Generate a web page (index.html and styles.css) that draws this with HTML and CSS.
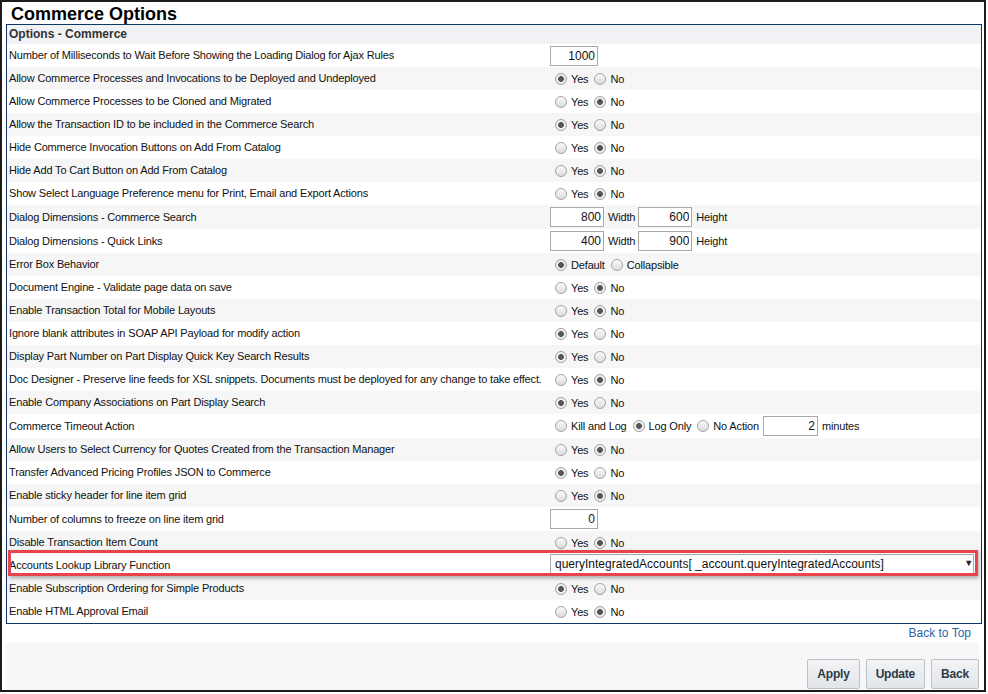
FILE: index.html
```html
<!DOCTYPE html>
<html lang="en">
  <head>
    <meta charset="UTF-8" />
    <title>Commerce Options</title>
    <link rel="stylesheet" href="styles.css">
  </head>
  <body>
    <div class="frame">
      <h1 class="page-title">Commerce Options</h1>

      <div class="panel">
        <div class="panel-head">Options - Commerce</div>

        <div class="rows">
          <div class="row">
            <div class="label">Number of Milliseconds to Wait Before Showing the Loading Dialog for Ajax Rules</div>
            <div class="value"><input type="text" class="num w48" value="1000" /></div>
          </div>
          <div class="row">
            <div class="label">Allow Commerce Processes and Invocations to be Deployed and Undeployed</div>
            <div class="value">
              <label class="opt"><input type="radio" name="r2" checked />Yes</label>
              <label class="opt"><input type="radio" name="r2" />No</label>
            </div>
          </div>
          <div class="row">
            <div class="label">Allow Commerce Processes to be Cloned and Migrated</div>
            <div class="value">
              <label class="opt"><input type="radio" name="r3" />Yes</label>
              <label class="opt"><input type="radio" name="r3" checked />No</label>
            </div>
          </div>
          <div class="row">
            <div class="label">Allow the Transaction ID to be included in the Commerce Search</div>
            <div class="value">
              <label class="opt"><input type="radio" name="r4" checked />Yes</label>
              <label class="opt"><input type="radio" name="r4" />No</label>
            </div>
          </div>
          <div class="row">
            <div class="label">Hide Commerce Invocation Buttons on Add From Catalog</div>
            <div class="value">
              <label class="opt"><input type="radio" name="r5" />Yes</label>
              <label class="opt"><input type="radio" name="r5" checked />No</label>
            </div>
          </div>
          <div class="row">
            <div class="label">Hide Add To Cart Button on Add From Catalog</div>
            <div class="value">
              <label class="opt"><input type="radio" name="r6" />Yes</label>
              <label class="opt"><input type="radio" name="r6" checked />No</label>
            </div>
          </div>
          <div class="row">
            <div class="label">Show Select Language Preference menu for Print, Email and Export Actions</div>
            <div class="value">
              <label class="opt"><input type="radio" name="r7" />Yes</label>
              <label class="opt"><input type="radio" name="r7" checked />No</label>
            </div>
          </div>
          <div class="row tall">
            <div class="label">Dialog Dimensions - Commerce Search</div>
            <div class="value">
              <input type="text" class="num w54" value="800" /><span class="unit">Width</span>
              <input type="text" class="num w54" value="600" /><span class="unit">Height</span>
            </div>
          </div>
          <div class="row tall">
            <div class="label">Dialog Dimensions - Quick Links</div>
            <div class="value">
              <input type="text" class="num w54" value="400" /><span class="unit">Width</span>
              <input type="text" class="num w54" value="900" /><span class="unit">Height</span>
            </div>
          </div>
          <div class="row">
            <div class="label">Error Box Behavior</div>
            <div class="value">
              <label class="opt"><input type="radio" name="r10" checked />Default</label>
              <label class="opt"><input type="radio" name="r10" />Collapsible</label>
            </div>
          </div>
          <div class="row">
            <div class="label">Document Engine - Validate page data on save</div>
            <div class="value">
              <label class="opt"><input type="radio" name="r11" />Yes</label>
              <label class="opt"><input type="radio" name="r11" checked />No</label>
            </div>
          </div>
          <div class="row">
            <div class="label">Enable Transaction Total for Mobile Layouts</div>
            <div class="value">
              <label class="opt"><input type="radio" name="r12" />Yes</label>
              <label class="opt"><input type="radio" name="r12" checked />No</label>
            </div>
          </div>
          <div class="row">
            <div class="label">Ignore blank attributes in SOAP API Payload for modify action</div>
            <div class="value">
              <label class="opt"><input type="radio" name="r13" checked />Yes</label>
              <label class="opt"><input type="radio" name="r13" />No</label>
            </div>
          </div>
          <div class="row">
            <div class="label">Display Part Number on Part Display Quick Key Search Results</div>
            <div class="value">
              <label class="opt"><input type="radio" name="r14" checked />Yes</label>
              <label class="opt"><input type="radio" name="r14" />No</label>
            </div>
          </div>
          <div class="row">
            <div class="label">Doc Designer - Preserve line feeds for XSL snippets. Documents must be deployed for any change to take effect.</div>
            <div class="value">
              <label class="opt"><input type="radio" name="r15" />Yes</label>
              <label class="opt"><input type="radio" name="r15" checked />No</label>
            </div>
          </div>
          <div class="row">
            <div class="label">Enable Company Associations on Part Display Search</div>
            <div class="value">
              <label class="opt"><input type="radio" name="r16" checked />Yes</label>
              <label class="opt"><input type="radio" name="r16" />No</label>
            </div>
          </div>
          <div class="row tall">
            <div class="label">Commerce Timeout Action</div>
            <div class="value">
              <label class="opt"><input type="radio" name="r17" />Kill and Log</label>
              <label class="opt"><input type="radio" name="r17" checked />Log Only</label>
              <label class="opt tight"><input type="radio" name="r17" />No Action</label>
              <input type="text" class="num w55" value="2" /><span class="unit">minutes</span>
            </div>
          </div>
          <div class="row">
            <div class="label">Allow Users to Select Currency for Quotes Created from the Transaction Manager</div>
            <div class="value">
              <label class="opt"><input type="radio" name="r18" />Yes</label>
              <label class="opt"><input type="radio" name="r18" checked />No</label>
            </div>
          </div>
          <div class="row">
            <div class="label">Transfer Advanced Pricing Profiles JSON to Commerce</div>
            <div class="value">
              <label class="opt"><input type="radio" name="r19" checked />Yes</label>
              <label class="opt"><input type="radio" name="r19" />No</label>
            </div>
          </div>
          <div class="row">
            <div class="label">Enable sticky header for line item grid</div>
            <div class="value">
              <label class="opt"><input type="radio" name="r20" />Yes</label>
              <label class="opt"><input type="radio" name="r20" checked />No</label>
            </div>
          </div>
          <div class="row tall">
            <div class="label">Number of columns to freeze on line item grid</div>
            <div class="value"><input type="text" class="num w48" value="0" /></div>
          </div>
          <div class="row">
            <div class="label">Disable Transaction Item Count</div>
            <div class="value">
              <label class="opt"><input type="radio" name="r22" />Yes</label>
              <label class="opt"><input type="radio" name="r22" checked />No</label>
            </div>
          </div>
          <div class="row marked">
            <div class="label">Accounts Lookup Library Function</div>
            <div class="value">
              <span class="select-wrap">
                <select class="lookup">
                  <option>queryIntegratedAccounts[ _account.queryIntegratedAccounts]</option>
                </select>
              </span>
            </div>
          </div>
          <div class="row">
            <div class="label">Enable Subscription Ordering for Simple Products</div>
            <div class="value">
              <label class="opt"><input type="radio" name="r24" checked />Yes</label>
              <label class="opt"><input type="radio" name="r24" />No</label>
            </div>
          </div>
          <div class="row">
            <div class="label">Enable HTML Approval Email</div>
            <div class="value">
              <label class="opt"><input type="radio" name="r25" />Yes</label>
              <label class="opt"><input type="radio" name="r25" checked />No</label>
            </div>
          </div>
        </div>
      </div>

      <div class="to-top"><a href="#">Back to Top</a></div>

      <div class="actions">
        <button type="button">Apply</button>
        <button type="button">Update</button>
        <button type="button">Back</button>
      </div>
    </div>
  </body>
</html>
```

FILE: styles.css
```css
* {
  box-sizing: border-box;
}

body {
  margin: 0;
  font-family: "Liberation Sans", Arial, sans-serif;
  font-size: 11px;
  letter-spacing: -0.16px;
  color: #111;
  background: #fff;
}

.frame {
  width: 986px;
  height: 692px;
  border: 2px solid #1c1c1c;
  overflow: hidden;
}

.page-title {
  margin: 0;
  height: 22px;
  padding: 3px 0 0 9px;
  font-size: 18px;
  line-height: 19px;
  font-weight: bold;
  letter-spacing: 0;
  color: #000;
}

/* panel */
.panel {
  margin: 0 2px 0 4px;
  border: 1px solid #0e3766;
}

.panel-head {
  height: 19px;
  padding: 0 0 0 2px;
  background: #f0f2f6;
  font-size: 12px;
  line-height: 19px;
  font-weight: bold;
  letter-spacing: 0;
  color: #333;
}

.row {
  display: flex;
  align-items: center;
  height: 23px;
}

.row.tall {
  height: 24px;
}

.rows .row:nth-child(even) {
  background: #f6f6f6;
}

.label {
  width: 543px;
  flex: none;
  margin-bottom: 1px;
  padding-left: 2px;
  white-space: nowrap;
  overflow: hidden;
}

.value {
  display: flex;
  align-items: center;
  padding-left: 5px;
  white-space: nowrap;
}

.opt {
  display: inline-flex;
  align-items: center;
  margin-right: 6px;
}

.opt.tight {
  margin-right: 4px;
}

input[type="radio"] {
  appearance: none;
  -webkit-appearance: none;
  width: 12px;
  height: 12px;
  margin: 0 4px 0 0;
  border: 1px solid #a3a3a3;
  border-radius: 50%;
  background: linear-gradient(#fbfbfb, #dcdcdc);
}

input[type="radio"]:checked {
  background: radial-gradient(circle, #565656 0, #565656 2.6px, #f2f2f2 3.2px, #e2e2e2 100%);
}

input.num {
  height: 20px;
  margin: 0;
  padding: 0 2px;
  border: 1px solid #a9a9a9;
  font-family: "Liberation Sans", Arial, sans-serif;
  font-size: 12px;
  letter-spacing: 0;
  text-align: right;
  color: #111;
  background: #fff;
}

.value input.num:first-child {
  margin-left: -5px;
}

.w48 { width: 48px; }
.w54 { width: 54px; }
.w55 { width: 55px; }

.unit {
  margin: 0 3px 0 4px;
}

/* highlighted row */
.row.marked {
  position: relative;
  background: #fff;
}

.row.marked::after {
  content: "";
  position: absolute;
  top: -4px;
  left: 1px;
  right: 3px;
  bottom: 1px;
  border: 3px solid #e9434b;
  box-shadow: 1px 2px 4px rgba(0, 0, 0, 0.35);
  pointer-events: none;
}

.select-wrap {
  position: relative;
  display: block;
  margin-left: -5px;
  margin-top: -3px;
}

.select-wrap::after {
  content: "\25BC";
  position: absolute;
  right: 1px;
  top: 4px;
  font-size: 9px;
  color: #222;
  pointer-events: none;
}

select.lookup {
  appearance: none;
  -webkit-appearance: none;
  width: 424px;
  height: 20px;
  margin: 0;
  padding: 0 4px;
  border: 1px solid #a9a9a9;
  border-radius: 0;
  background: #fff;
  font-family: "Liberation Sans", Arial, sans-serif;
  font-size: 12px;
  letter-spacing: 0;
  color: #111;
}

/* footer */
.to-top {
  height: 19px;
  padding: 2px 13px 0 0;
  text-align: right;
  font-size: 12px;
  letter-spacing: 0;
}

.to-top a {
  color: #2a64a6;
  text-decoration: none;
}

.actions {
  display: flex;
  justify-content: flex-end;
  gap: 6px;
  height: 47px;
  margin: 0 5px 0 4px;
  padding-top: 16px;
  background: #f7f7f7;
}

.actions button {
  height: 30px;
  padding: 0 9px;
  border: 1px solid #bac1c7;
  border-radius: 2px;
  background: linear-gradient(#f2f4f6, #e1e5e9);
  font-family: "Liberation Sans", Arial, sans-serif;
  font-size: 12px;
  font-weight: bold;
  letter-spacing: -0.2px;
  color: #2e3a45;
}
```
